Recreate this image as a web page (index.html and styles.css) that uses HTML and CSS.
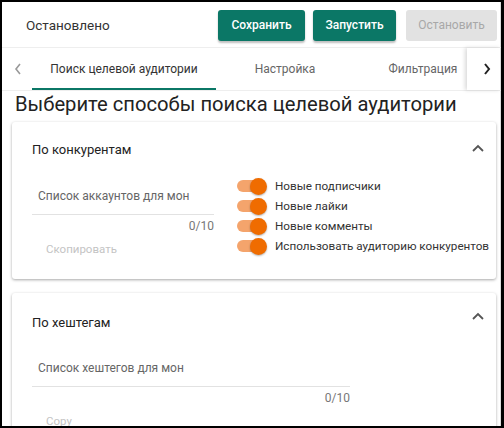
FILE: index.html
```html
<!DOCTYPE html>
<html lang="ru">
<head>
    <meta charset="UTF-8">
    <meta name="viewport" content="width=device-width, initial-scale=1.0">
    <title>Поиск аудитории</title>
    <link rel="stylesheet" href="styles.css">
</head>
<body>
<div class="frame">
    <div class="toolbar">
        <span class="status">Остановлено</span>
        <div class="actions">
            <button class="btn">Сохранить</button>
            <button class="btn">Запустить</button>
            <button class="btn disabled">Остановить</button>
        </div>
    </div>

    <div class="tabs">
        <div class="tab-arrow left">
            <svg width="8" height="12" viewBox="0 0 8 12"><path d="M6 1 L2 6 L6 11" fill="none" stroke="#999" stroke-width="1.6"/></svg>
        </div>
        <div class="tab-list">
            <div class="tab active">Поиск целевой аудитории</div>
            <div class="tab">Настройка</div>
            <div class="tab">Фильтрация</div>
        </div>
        <div class="tab-arrow right">
            <svg width="8" height="12" viewBox="0 0 8 12"><path d="M2 1 L6 6 L2 11" fill="none" stroke="#222" stroke-width="2"/></svg>
        </div>
    </div>

    <h1 class="title">Выберите способы поиска целевой аудитории</h1>

    <div class="panel">
        <div class="panel-head">
            <span>По конкурентам</span>
            <svg class="chev" width="12" height="8" viewBox="0 0 12 8"><path d="M1 7 L6 2 L11 7" fill="none" stroke="#555" stroke-width="1.8"/></svg>
        </div>
        <div class="panel-body">
            <div class="field-col">
                <div class="field narrow">
                    <div class="placeholder">Список аккаунтов для мон</div>
                </div>
                <div class="hint narrow">0/10</div>
                <div class="link-btn">Скопировать</div>
            </div>
            <div class="toggles">
                <div class="toggle"><span class="switch"></span>Новые подписчики</div>
                <div class="toggle"><span class="switch"></span>Новые лайки</div>
                <div class="toggle"><span class="switch"></span>Новые комменты</div>
                <div class="toggle"><span class="switch"></span>Использовать аудиторию конкурентов</div>
            </div>
        </div>
    </div>

    <div class="panel second">
        <div class="panel-head tall">
            <span>По хештегам</span>
            <svg class="chev" width="12" height="8" viewBox="0 0 12 8"><path d="M1 7 L6 2 L11 7" fill="none" stroke="#555" stroke-width="1.8"/></svg>
        </div>
        <div class="panel-body">
            <div class="field-col">
                <div class="field wide">
                    <div class="placeholder">Список хештегов для мон</div>
                </div>
                <div class="hint wide">0/10</div>
                <div class="link-btn">Copy</div>
            </div>
        </div>
    </div>
</div>
</body>
</html>
```

FILE: styles.css
```css
* {
    box-sizing: border-box;
}
html, body {
    margin: 0;
    padding: 0;
    background: #000;
}
body {
    font-family: Roboto, "Liberation Sans", Arial, sans-serif;
    color: #333;
}
.frame {
    width: 504px;
    height: 428px;
    border-style: solid;
    border-color: #000;
    border-width: 2px 3px 2px 2px;
    background: #fff;
    overflow: hidden;
    box-shadow: inset -1px 0 0 #ddd;
}
.toolbar {
    display: flex;
    align-items: center;
    height: 46px;
    padding: 0 4px 0 24px;
    border-bottom: 1px solid #eee;
}
.status {
    flex: 1;
    font-size: 13.5px;
    color: #333;
    padding-top: 1px;
}
.actions {
    display: flex;
    gap: 8px;
    margin-top: 1px;
}
.btn {
    font-family: inherit;
    font-size: 12px;
    font-weight: 500;
    color: #fff;
    background: #0b7766;
    border: none;
    border-radius: 3px;
    height: 31px;
    width: 87px;
    padding: 0;
    box-shadow: 0 2px 2px rgba(0, 0, 0, 0.25);
}
.btn + .btn {
    width: 83px;
}
.btn.disabled {
    width: 91px;
    margin-left: 2px;
    background: #e2e2e2;
    color: #a8a8a8;
    font-weight: normal;
    box-shadow: none;
}
.tabs {
    display: flex;
    height: 43px;
    border-bottom: 1px solid #eee;
}
.tab-arrow {
    width: 30px;
    display: flex;
    align-items: center;
    justify-content: center;
    flex-shrink: 0;
}
.tab-arrow.left {
    padding-left: 2px;
}
.tab-arrow.right {
    width: 34px;
    box-shadow: -2px 0 4px rgba(0, 0, 0, 0.15);
    padding-left: 6px;
}
.tab-list {
    flex: 1;
    display: flex;
    overflow: hidden;
}
.tab {
    flex-shrink: 0;
    width: 138px;
    display: flex;
    align-items: center;
    justify-content: center;
    font-size: 12px;
    color: #666;
}
.tab.active {
    width: 184px;
    color: #333;
    border-bottom: 2px solid #0b7766;
    padding-top: 2px;
}
.title {
    margin: 0;
    padding: 1px 0 0 13px;
    height: 31px;
    font-size: 20.2px;
    font-weight: normal;
    line-height: 24px;
    color: #222;
    white-space: nowrap;
}
.panel {
    margin: 0 5px 0 10px;
    background: #fff;
    border-radius: 3px;
    box-shadow: 0 1px 3px rgba(0, 0, 0, 0.35);
    padding: 0 10px 0 20px;
}
.panel.second {
    margin-top: 14px;
}
.panel-head {
    height: 54px;
    display: flex;
    align-items: center;
    justify-content: space-between;
    font-size: 13px;
    color: #222;
    padding-top: 1px;
}
.panel-head.tall {
    height: 55px;
    padding-top: 3px;
}
.chev {
    margin-right: 2px;
    margin-top: -4px;
}
.panel-head.tall .chev {
    margin-top: -12px;
}
.panel-body {
    display: flex;
    padding-bottom: 20px;
}
.field-col {
    display: flex;
    flex-direction: column;
}
.field {
    height: 39px;
    border-bottom: 1px solid #e2e2e2;
    padding: 13px 0 0 6px;
}
.narrow {
    width: 182px;
}
.wide {
    width: 318px;
}
.placeholder {
    font-size: 12px;
    color: #666;
    white-space: nowrap;
}
.hint {
    text-align: right;
    font-size: 12px;
    color: #777;
    padding-top: 4px;
    height: 18px;
}
.link-btn {
    font-size: 11.5px;
    color: #c4c4c4;
    padding: 9px 0 0 14px;
    height: 26px;
}
.toggles {
    margin-left: 23px;
}
.toggle {
    display: flex;
    align-items: center;
    height: 20px;
    font-size: 11.7px;
    color: #333;
    white-space: nowrap;
}
.switch {
    position: relative;
    display: inline-block;
    width: 28px;
    height: 12px;
    border-radius: 6px;
    background: #f4a46c;
    margin-right: 10px;
}
.switch::after {
    content: "";
    position: absolute;
    right: -2px;
    top: -2.5px;
    width: 17px;
    height: 17px;
    border-radius: 50%;
    background: #ef6c00;
    box-shadow: 0 1px 2px rgba(0, 0, 0, 0.3);
}
```
